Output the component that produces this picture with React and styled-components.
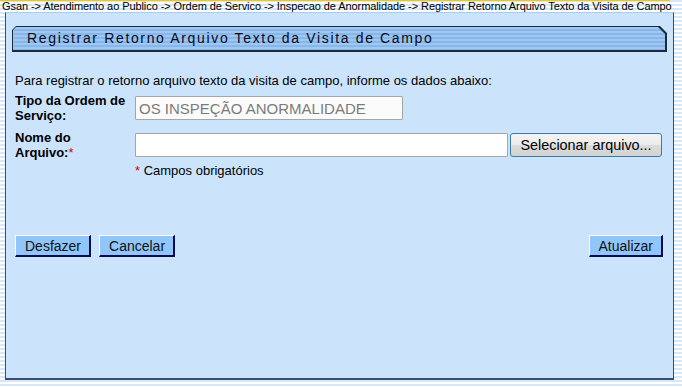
import React from 'react'
import styled, { createGlobalStyle } from 'styled-components'

const GlobalStyle = createGlobalStyle`
    body {
        margin: 0;
        font-family: "Liberation Sans", Arial, sans-serif;
        background: repeating-linear-gradient(to bottom, #d5e7f8 0 2px, #ffffff 2px 4px);
        height: 387px;
        overflow: hidden;
    }
`

export default function App() {
    return (
        <>
            <GlobalStyle />
            <Breadcrumb>
                Gsan -&gt; Atendimento ao Publico -&gt; Ordem de Servico -&gt; Inspecao de Anormalidade -&gt; Registrar Retorno Arquivo Texto da Visita de Campo
            </Breadcrumb>
            <Panel>
                <TitleBar>
                    <TitleInner>Registrar Retorno Arquivo Texto da Visita de Campo</TitleInner>
                </TitleBar>
                <Intro>Para registrar o retorno arquivo texto da visita de campo, informe os dados abaixo:</Intro>
                <Form>
                    <Label>Tipo da Ordem de Serviço:</Label>
                    <Field>
                        <TextInput width="268px" disabled value="OS INSPEÇÃO ANORMALIDADE" readOnly />
                    </Field>
                    <Label>Nome do Arquivo:<Req>*</Req></Label>
                    <Field>
                        <TextInput width="373px" readOnly value="" />
                        <FileButton>Selecionar arquivo...</FileButton>
                    </Field>
                    <span />
                    <Note><Req>*</Req> Campos obrigatórios</Note>
                </Form>
                <Actions>
                    <Group>
                        <ActionButton>Desfazer</ActionButton>
                        <ActionButton>Cancelar</ActionButton>
                    </Group>
                    <ActionButton>Atualizar</ActionButton>
                </Actions>
            </Panel>
        </>
    )
}

const Breadcrumb = styled.div`
    height: 12px;
    padding-left: 2px;
    font-size: 11px;
    letter-spacing: -0.08px;
    line-height: 12px;
    color: #000;
    white-space: nowrap;
    width: 668px;
    background: linear-gradient(to bottom, #f7c600 0 1px, transparent 1px);
`

const Panel = styled.div`
    margin-left: 5px;
    width: 667px;
    height: 352px;
    background: #cbe4fc;
    border-top: 1px solid #a8cdf0;
    border-left: 1px solid #34506c;
    border-right: 1px solid #34506c;
    border-bottom: 2px solid #34506c;
    padding-top: 13px;
    box-sizing: content-box;
`

const TitleBar = styled.div`
    margin-left: 6px;
    width: 655px;
    height: 26px;
    background: #1c2a3a;
    clip-path: polygon(4px 0, 648px 0, 655px 7px, 655px 100%, 0 100%, 0 4px);
    padding: 1px 2px 2px 1px;
    box-sizing: border-box;
`

const TitleInner = styled.div`
    height: 100%;
    background: repeating-linear-gradient(to bottom, #9fc7f1 0 2px, #86b7ea 2px 4px);
    clip-path: polygon(3px 0, 645px 0, 652px 7px, 652px 100%, 0 100%, 0 3px);
    font-size: 14px;
    letter-spacing: 1.65px;
    line-height: 23px;
    padding-left: 14px;
    color: #0a0a20;
`

const Intro = styled.p`
    margin: 21px 0 0 9px;
    font-size: 13px;
    line-height: 15px;
    color: #000;
`

const Form = styled.div`
    display: grid;
    grid-template-columns: 120px 1fr;
    row-gap: 7px;
    margin: 5px 0 0 9px;
    align-items: center;
`

const Label = styled.div`
    font-weight: bold;
    font-size: 13px;
    line-height: 15px;
    color: #000;
    width: 112px;
`

const Req = styled.span`
    color: #e00000;
    font-weight: normal;
`

const Field = styled.div`
    display: flex;
    align-items: center;
    gap: 2px;
`

const TextInput = styled.input`
    width: ${props => props.width};
    height: 24px;
    box-sizing: border-box;
    border: 1px solid #a6a6a6;
    border-radius: 1px;
    background: #ffffff;
    font-family: "Liberation Sans", Arial, sans-serif;
    font-size: 15px;
    color: #7b7b7b;
    padding: 0 3px;
    margin: 0;
    &:disabled {
        background: #fbfbfb;
        color: #7b7b7b;
    }
`

const FileButton = styled.button`
    height: 24px;
    width: 152px;
    box-sizing: border-box;
    border: 1px solid #3d7bab;
    border-radius: 3px;
    background: linear-gradient(to bottom, #f4f4f4 0%, #ebebeb 50%, #dcdcdc 51%, #d2d2d2 100%);
    font-family: "Liberation Sans", Arial, sans-serif;
    font-size: 14.4px;
    color: #000;
    padding: 0;
    margin: 0;
`

const Note = styled.div`
    font-size: 13px;
    line-height: 14px;
    margin-top: -3px;
    color: #000;
`

const Actions = styled.div`
    display: flex;
    justify-content: space-between;
    margin: 57px 10px 0 9px;
`

const Group = styled.div`
    display: flex;
    gap: 8px;
`

const ActionButton = styled.button`
    height: 22px;
    box-sizing: border-box;
    padding: 0 8px 0 9px;
    background: #90c6fa;
    border-top: 1px solid #ffffff;
    border-left: 1px solid #ffffff;
    border-right: 2px solid #0a0a50;
    border-bottom: 2px solid #0a0a50;
    font-family: "Liberation Sans", Arial, sans-serif;
    font-size: 14px;
    color: #111;
    margin: 0;
`
